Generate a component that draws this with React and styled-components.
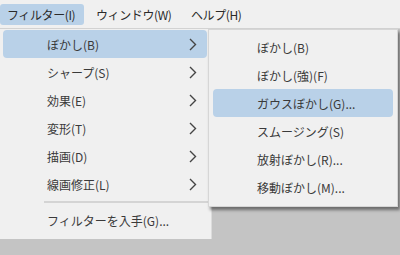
import React from 'react';
import styled, { createGlobalStyle } from 'styled-components';

const GlobalStyle = createGlobalStyle`
    html, body {
        margin: 0;
        padding: 0;
        background: #c4c4c4;
    }
    body {
        font-family: "Noto Sans CJK JP", "Noto Sans", sans-serif;
        font-size: 12px;
        color: #333;
    }
`;

const Screen = styled.div`
    position: relative;
    width: 400px;
    height: 255px;
    overflow: hidden;
    background: #c4c4c4;
`;

const MenuBar = styled.div`
    height: 29px;
    display: flex;
    align-items: center;
    gap: 5px;
    background: #f0f0f0;
    border-bottom: 1px solid #d2d2d2;
    box-sizing: border-box;
`;

const BarItem = styled.div`
    flex: none;
    width: ${p => p.$width}px;
    min-width: 0;
    height: 21px;
    display: flex;
    align-items: center;
    box-sizing: border-box;
    padding: 0 7px;
    border-radius: 3px;
    background: ${p => (p.$active ? '#b9d1e8' : 'transparent')};
    color: #2a2a2a;
    letter-spacing: -0.4px;
    white-space: nowrap;
`;

const Dropdown = styled.div`
    position: absolute;
    left: 0;
    top: 29px;
    width: 212px;
    height: 210px;
    box-sizing: border-box;
    padding-top: 1px;
    background: #f0f0f0;
    border-right: 1px solid #dcdcdc;
`;

const SubMenu = styled.div`
    position: absolute;
    left: 208px;
    top: 29px;
    width: 190px;
    height: 178px;
    box-sizing: border-box;
    padding: 3px 4px 0 4px;
    background: #f0f0f0;
    border: 1px solid #d6d6d6;
    box-shadow: 2px 3px 3px rgba(0, 0, 0, 0.45);
`;

const Item = styled.div`
    height: 28px;
    display: flex;
    align-items: center;
    justify-content: space-between;
    box-sizing: border-box;
    padding: 0 10px 0 ${p => p.$indent}px;
    margin: ${p => p.$margin || '0'};
    border-radius: 4px;
    background: ${p => (p.$active ? '#b9d1e8' : 'transparent')};
    color: #3a3a3a;
    white-space: nowrap;
`;

const Separator = styled.div`
    height: 2px;
    margin: 3px 0 3px 44px;
    background: #d4d4d4;
`;

const Chevron = () => (
    <svg width="8" height="13" viewBox="0 0 8 13">
        <path d="M1 1 L6.5 6.5 L1 12" fill="none" stroke="#454545" strokeWidth="1.4" />
    </svg>
);

const filters = [
    { label: 'ぼかし(B)', active: true },
    { label: 'シャープ(S)' },
    { label: '効果(E)' },
    { label: '変形(T)' },
    { label: '描画(D)' },
    { label: '線画修正(L)' },
];

const blurs = [
    { label: 'ぼかし(B)' },
    { label: 'ぼかし(強)(F)' },
    { label: 'ガウスぼかし(G)...', active: true },
    { label: 'スムージング(S)' },
    { label: '放射ぼかし(R)...' },
    { label: '移動ぼかし(M)...' },
];

export default function App() {
    return (
        <Screen>
            <GlobalStyle />
            <MenuBar>
                <BarItem $active $width={84}>フィルター(I)</BarItem>
                <BarItem $width={90}>ウィンドウ(W)</BarItem>
                <BarItem $width={70}>ヘルプ(H)</BarItem>
            </MenuBar>

            <Dropdown>
                {filters.map(f => (
                    <Item key={f.label} $indent={44} $margin="0 4px 0 3px" $active={f.active}>
                        <span>{f.label}</span>
                        <Chevron />
                    </Item>
                ))}
                <Separator />
                <Item $indent={44} $margin="0 4px 0 3px">
                    <span>フィルターを入手(G)...</span>
                </Item>
            </Dropdown>

            <SubMenu>
                {blurs.map(b => (
                    <Item key={b.label} $indent={44} $active={b.active}>
                        <span>{b.label}</span>
                    </Item>
                ))}
            </SubMenu>
        </Screen>
    );
}
